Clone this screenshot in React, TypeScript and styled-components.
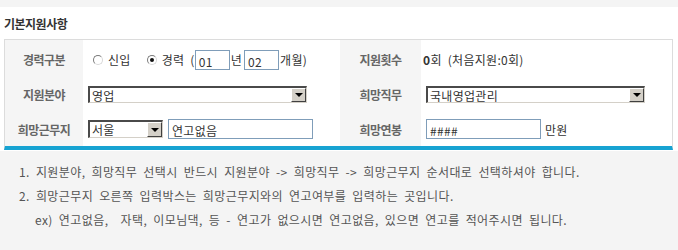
import React from "react";
import styled, { createGlobalStyle } from "styled-components";

const Global = createGlobalStyle`
  html, body { margin: 0; padding: 0; background: #fff; }
  body { font-family: "Noto Sans CJK KR", "Noto Sans", sans-serif; font-size: 12px; color: #333; }
`;

const Page = styled.div`
  width: 678px;
  height: 250px;
  display: flex;
  flex-direction: column;
  overflow: hidden;
`;

const TopStrip = styled.div`
  height: 7px;
  background: #f4f4f4;
`;

const Title = styled.h3`
  margin: 0;
  height: 32px;
  padding-left: 4px;
  display: flex;
  align-items: center;
  font-size: 12px;
  font-weight: 700;
  color: #333;
  letter-spacing: -0.5px;
`;

const Form = styled.div`
  margin: 0 5px 0 4px;
  border: 1px solid #dcdcdc;
  border-bottom: 4px solid #17a3d2;
  display: grid;
  grid-template-columns: 78px 257px 81px 1fr;
  grid-template-rows: 37px 35px 34px;
`;

const Label = styled.div<{ $top?: number }>`
  background: #f5f5f5;
  color: #666;
  font-weight: 700;
  letter-spacing: -0.5px;
  display: flex;
  align-items: center;
  justify-content: center;
  padding-top: ${(p) => p.$top ?? 0}px;
`;

const Value = styled.div<{ $pad?: number; $top?: number }>`
  display: flex;
  align-items: center;
  padding-left: ${(p) => p.$pad ?? 5}px;
  padding-top: ${(p) => p.$top ?? 0}px;
  color: #333;
  white-space: pre;
  letter-spacing: 0.3px;
  word-spacing: 3px;
`;

const Radio = styled.span<{ $checked?: boolean; $ml?: number }>`
  position: relative;
  width: 10px;
  height: 10px;
  box-sizing: border-box;
  border-radius: 50%;
  border: 1px solid;
  border-color: #7a7a7a #d8d8d8 #d8d8d8 #7a7a7a;
  background: #fff;
  margin-left: ${(p) => p.$ml ?? 0}px;
  margin-right: 5px;
  flex: none;
  &::after {
    content: "";
    display: ${(p) => (p.$checked ? "block" : "none")};
    position: absolute;
    left: 2px;
    top: 2px;
    width: 4px;
    height: 4px;
    border-radius: 50%;
    background: #111;
  }
`;

const Txt = styled.span<{ $ml?: number; $mr?: number }>`
  margin-left: ${(p) => p.$ml ?? 0}px;
  margin-right: ${(p) => p.$mr ?? 0}px;
`;

const TextInput = styled.div<{ $w: number; $ml?: number }>`
  width: ${(p) => p.$w}px;
  height: 20px;
  box-sizing: border-box;
  border: 1px solid #7f9db9;
  background: #fff;
  margin-left: ${(p) => p.$ml ?? 0}px;
  padding: 3px 0 0 3px;
  font-size: 12px;
  line-height: 16px;
  color: #333;
  letter-spacing: 0.3px;
  flex: none;
`;

const Select = styled.div<{ $w: number; $h: number; $ml?: number }>`
  width: ${(p) => p.$w}px;
  height: ${(p) => p.$h}px;
  box-sizing: border-box;
  border-top: 2px solid #4a4a4a;
  border-left: 2px solid #4a4a4a;
  border-right: 1px solid #d4d0c8;
  border-bottom: 1px solid #d4d0c8;
  background: #fff;
  margin-left: ${(p) => p.$ml ?? 0}px;
  display: flex;
  align-items: stretch;
  flex: none;
`;

const SelectText = styled.span`
  flex: 1;
  padding-left: 2px;
  display: flex;
  align-items: center;
  font-size: 12px;
  color: #333;
  letter-spacing: 0.3px;
`;

const SelectBtn = styled.span`
  width: 15px;
  box-sizing: border-box;
  background: #d4d0c8;
  border-top: 1px solid #fff;
  border-left: 1px solid #fff;
  border-right: 1px solid #404040;
  border-bottom: 1px solid #404040;
  display: flex;
  align-items: center;
  justify-content: center;
  &::after {
    content: "";
    width: 0;
    height: 0;
    border-left: 4px solid transparent;
    border-right: 4px solid transparent;
    border-top: 4px solid #000;
  }
`;

const Bold = styled.b`
  font-weight: 700;
`;

const Notes = styled.div`
  flex: 1;
  margin-top: 1px;
  background: #f4f4f4;
  padding: 9px 0 0 19px;
  color: #555;
  line-height: 24px;
  letter-spacing: 0.4px;
  word-spacing: 3px;
`;

const Note = styled.div<{ $indent?: number }>`
  padding-left: ${(p) => p.$indent ?? 0}px;
  white-space: pre;
`;

function FakeSelect({ w, h, ml, value }: { w: number; h: number; ml?: number; value: string }) {
  return (
    <Select $w={w} $h={h} $ml={ml}>
      <SelectText>{value}</SelectText>
      <SelectBtn />
    </Select>
  );
}

export default function App() {
  return (
    <Page>
      <Global />
      <TopStrip />
      <Title>기본지원사항</Title>
      <Form>
        <Label $top={2}>경력구분</Label>
        <Value $pad={10} $top={2}>
          <Radio />
          <Txt>신입</Txt>
          <Radio $checked $ml={16} />
          <Txt>경력 (</Txt>
          <TextInput $w={35}>01</TextInput>
          <Txt $ml={1} $mr={2}>년</Txt>
          <TextInput $w={35}>02</TextInput>
          <Txt $ml={1}>개월)</Txt>
        </Value>
        <Label $top={2}>지원횟수</Label>
        <Value $pad={2} $top={2}>
          <Bold>0</Bold>회 (처음지원:0회)
        </Value>

        <Label>지원분야</Label>
        <Value>
          <FakeSelect w={219} h={17} value="영업" />
        </Value>
        <Label>희망직무</Label>
        <Value>
          <FakeSelect w={219} h={17} value="국내영업관리" />
        </Value>

        <Label>희망근무지</Label>
        <Value>
          <FakeSelect w={75} h={18} value="서울" />
          <TextInput $w={145} $ml={5}>연고없음</TextInput>
        </Value>
        <Label>희망연봉</Label>
        <Value>
          <TextInput $w={115}>####</TextInput>
          <Txt $ml={4}>만원</Txt>
        </Value>
      </Form>
      <Notes>
        <Note>1. 지원분야, 희망직무 선택시 반드시 지원분야 -&gt; 희망직무 -&gt; 희망근무지 순서대로 선택하셔야 합니다.</Note>
        <Note>2. 희망근무지 오른쪽 입력박스는 희망근무지와의 연고여부를 입력하는 곳입니다.</Note>
        <Note $indent={16}>ex) 연고없음,  자택, 이모님댁, 등 - 연고가 없으시면 연고없음, 있으면 연고를 적어주시면 됩니다.</Note>
      </Notes>
    </Page>
  );
}
